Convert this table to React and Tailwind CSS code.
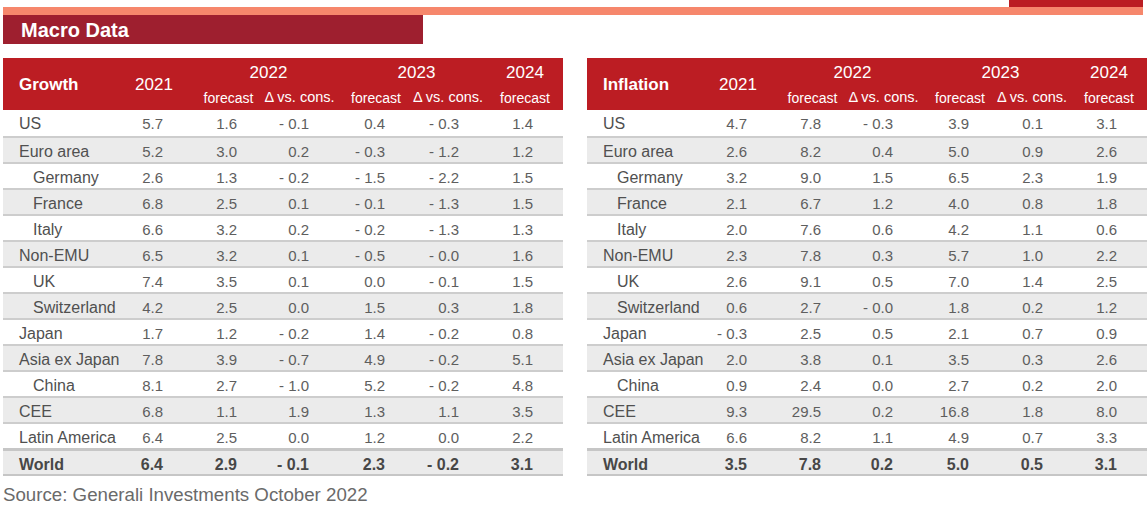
import React from "react";

const growth = [
  ["US", 0, "5.7", "1.6", "- 0.1", "0.4", "- 0.3", "1.4"],
  ["Euro area", 0, "5.2", "3.0", "0.2", "- 0.3", "- 1.2", "1.2"],
  ["Germany", 1, "2.6", "1.3", "- 0.2", "- 1.5", "- 2.2", "1.5"],
  ["France", 1, "6.8", "2.5", "0.1", "- 0.1", "- 1.3", "1.5"],
  ["Italy", 1, "6.6", "3.2", "0.2", "- 0.2", "- 1.3", "1.3"],
  ["Non-EMU", 0, "6.5", "3.2", "0.1", "- 0.5", "- 0.0", "1.6"],
  ["UK", 1, "7.4", "3.5", "0.1", "0.0", "- 0.1", "1.5"],
  ["Switzerland", 1, "4.2", "2.5", "0.0", "1.5", "0.3", "1.8"],
  ["Japan", 0, "1.7", "1.2", "- 0.2", "1.4", "- 0.2", "0.8"],
  ["Asia ex Japan", 0, "7.8", "3.9", "- 0.7", "4.9", "- 0.2", "5.1"],
  ["China", 1, "8.1", "2.7", "- 1.0", "5.2", "- 0.2", "4.8"],
  ["CEE", 0, "6.8", "1.1", "1.9", "1.3", "1.1", "3.5"],
  ["Latin America", 0, "6.4", "2.5", "0.0", "1.2", "0.0", "2.2"],
];
const growthWorld = ["World", 0, "6.4", "2.9", "- 0.1", "2.3", "- 0.2", "3.1"];

const inflation = [
  ["US", 0, "4.7", "7.8", "- 0.3", "3.9", "0.1", "3.1"],
  ["Euro area", 0, "2.6", "8.2", "0.4", "5.0", "0.9", "2.6"],
  ["Germany", 1, "3.2", "9.0", "1.5", "6.5", "2.3", "1.9"],
  ["France", 1, "2.1", "6.7", "1.2", "4.0", "0.8", "1.8"],
  ["Italy", 1, "2.0", "7.6", "0.6", "4.2", "1.1", "0.6"],
  ["Non-EMU", 0, "2.3", "7.8", "0.3", "5.7", "1.0", "2.2"],
  ["UK", 1, "2.6", "9.1", "0.5", "7.0", "1.4", "2.5"],
  ["Switzerland", 1, "0.6", "2.7", "- 0.0", "1.8", "0.2", "1.2"],
  ["Japan", 0, "- 0.3", "2.5", "0.5", "2.1", "0.7", "0.9"],
  ["Asia ex Japan", 0, "2.0", "3.8", "0.1", "3.5", "0.3", "2.6"],
  ["China", 1, "0.9", "2.4", "0.0", "2.7", "0.2", "2.0"],
  ["CEE", 0, "9.3", "29.5", "0.2", "16.8", "1.8", "8.0"],
  ["Latin America", 0, "6.6", "8.2", "1.1", "4.9", "0.7", "3.3"],
];
const inflationWorld = ["World", 0, "3.5", "7.8", "0.2", "5.0", "0.5", "3.1"];

const cols = "grid grid-cols-[116px_70px_79px_63px_90px_54px_88px]";
const pads = ["pr-[26px]", "pr-[31px]", "pr-[22px]", "pr-[36px]", "pr-[16px]", "pr-[30px]"];

function Row({ r, i, world }) {
  const [label, indent, ...vals] = r;
  const bg = i % 2 === 1 ? "bg-[#ebebeb]" : "bg-white";
  const border = world
    ? "border-t-[3px] border-b-2 border-[#c6c6c6] h-[28px]"
    : i === 0
    ? "h-[26px]"
    : "border-t-2 border-[#cdcdcd] h-[26px]";
  return (
    <div className={`${cols} ${bg} ${border} items-center`}>
      <div
        className={`${indent ? "pl-[30px]" : "pl-[16px]"} pt-[2px] whitespace-nowrap ${
          world ? "font-bold text-[16px] text-[#474747]" : "text-[16px] text-[#505050]"
        }`}
      >
        {label}
      </div>
      {vals.map((v, k) => (
        <div
          key={k}
          className={`flex justify-end pt-[2px] whitespace-nowrap ${pads[k]} ${
            world ? "font-bold text-[16px] text-[#474747]" : "text-[15px] text-[#5e5e5e]"
          }`}
        >
          {v}
        </div>
      ))}
    </div>
  );
}

function Table({ title, rows, world }) {
  return (
    <div className="w-[560px]">
      <div className={`${cols} grid-rows-[28px_24px] bg-[#bc1d23] text-white`}>
        <div className="row-span-2 flex items-center pl-[16px] pt-[2px] font-bold text-[17px]">{title}</div>
        <div className="row-span-2 flex items-center justify-center pt-[2px] text-[17px]">2021</div>
        <div className="col-span-2 flex items-center justify-center pl-[17px] pt-[2px] text-[17px]">2022</div>
        <div className="col-span-2 flex items-center justify-center pl-[27px] pt-[2px] text-[17px]">2023</div>
        <div className="flex items-center justify-center pl-[12px] pt-[2px] text-[17px]">2024</div>
        <div className="flex items-center justify-center text-[14px] whitespace-nowrap">forecast</div>
        <div className="flex items-center justify-center text-[14.5px] whitespace-nowrap">Δ vs. cons.</div>
        <div className="flex items-center justify-center text-[14px] whitespace-nowrap">forecast</div>
        <div className="flex items-center justify-center text-[14.5px] whitespace-nowrap">Δ vs. cons.</div>
        <div className="flex items-center justify-center pl-[12px] text-[14px] whitespace-nowrap">forecast</div>
      </div>
      {rows.map((r, i) => (
        <Row key={i} r={r} i={i} />
      ))}
      <Row r={world} i={1} world />
    </div>
  );
}

export default function App() {
  return (
    <div className="w-[1147px] h-[505px] bg-white pl-[3px] font-['Liberation_Sans',Arial,sans-serif] overflow-hidden">
      <div className="flex justify-end pr-[4px]">
        <div className="w-[134px] h-[7px] bg-[#bb1d22]" />
      </div>
      <div className="h-[8px] mr-[4px] bg-[#f6876c]" />
      <div className="w-[420px] h-[29px] bg-[#9e1f2f] flex items-center pl-[18px] pt-[1px] text-white font-bold text-[20px]">
        Macro Data
      </div>
      <div className="mt-[14px] flex gap-[24px]">
        <Table title="Growth" rows={growth} world={growthWorld} />
        <Table title="Inflation" rows={inflation} world={inflationWorld} />
      </div>
      <div className="mt-[8px] text-[18.7px] text-[#6a6a6a] leading-[22px]">
        Source: Generali Investments October 2022
      </div>
    </div>
  );
}
